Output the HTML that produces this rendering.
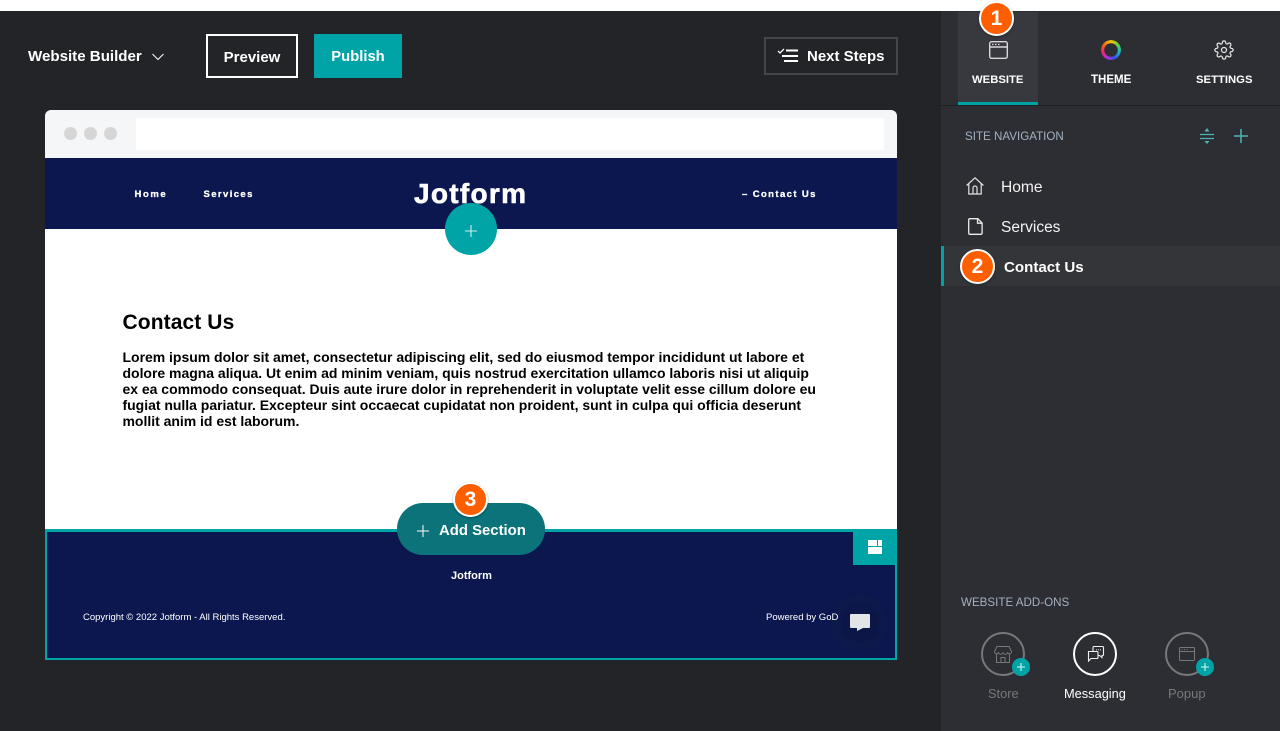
<!DOCTYPE html>
<html><head><meta charset="utf-8">
<style>
*{box-sizing:border-box;margin:0;padding:0}
html,body{width:1280px;height:731px;overflow:hidden;background:#fff;font-family:"Liberation Sans",sans-serif}
.a{position:absolute;white-space:nowrap}
svg{position:absolute;overflow:visible}
.b{font-weight:700}
.h{-webkit-text-stroke:.3px #fff}
.badge{position:absolute;width:35px;height:35px;border-radius:50%;background:#fd5f00;border:2px solid #fff;color:#fff;font-size:21px;font-weight:700;line-height:31px;text-align:center;box-shadow:0 1px 2px rgba(0,0,0,.35)}
</style></head><body>
<div class="a" style="left:0;top:11px;width:941px;height:720px;background:#232428"></div>
<div class="a" style="left:941px;top:11px;width:339px;height:720px;background:#2d2e33"></div>

<div class="a b" style="left:28px;top:48px;font-size:15.100px;line-height:18px;color:#fff">Website Builder</div>
<svg style="left:152px;top:53px" width="12" height="8" fill="none" stroke="#fff" stroke-width="1"><path d="M.5 1l5.500 5.500L11.500 1"/></svg>
<div class="a b" style="left:206px;top:34px;width:92px;height:44px;border:2px solid #fff;color:#fff;font-size:15px;line-height:43px;text-align:center">Preview</div>
<div class="a b" style="left:314px;top:34px;width:88px;height:44px;background:#00a4a6;color:#fff;font-size:14.800px;line-height:46px;text-align:center">Publish</div>
<div class="a" style="left:764px;top:37px;width:134px;height:38px;border:2px solid #44464b"></div>
<svg style="left:778px;top:48px" width="20" height="15" fill="none" stroke="#fff"><path d="M0 3l2 2 4-4" stroke-width="1.300"/><path d="M8 2.500h12M4 8h16M6 13h14" stroke-width="2"/></svg>
<div class="a b" style="left:807px;top:48px;font-size:15px;line-height:18px;color:#fff">Next Steps</div>

<!-- browser -->
<div class="a" style="left:45px;top:110px;width:852px;height:48px;background:#f5f6f8;border-radius:6px 6px 0 0"></div>
<div class="a" style="left:64px;top:127px;width:13px;height:13px;border-radius:50%;background:#d6d6d6"></div>
<div class="a" style="left:84px;top:127px;width:13px;height:13px;border-radius:50%;background:#d6d6d6"></div>
<div class="a" style="left:104px;top:127px;width:13px;height:13px;border-radius:50%;background:#d6d6d6"></div>
<div class="a" style="left:136px;top:118px;width:748px;height:32px;background:#fff"></div>
<div class="a" style="left:45px;top:158px;width:852px;height:71px;background:#0c1750"></div>
<div class="a" style="left:45px;top:229px;width:852px;height:300px;background:#fff"></div>
<div class="a b h" style="left:134.500px;top:188px;font-size:9.500px;line-height:13px;letter-spacing:1.600px;color:#fff">Home</div>
<div class="a b h" style="left:203.500px;top:188px;font-size:9.500px;line-height:13px;letter-spacing:1.400px;color:#fff">Services</div>
<div class="a b h" style="left:414px;top:177px;font-size:28px;line-height:34px;letter-spacing:1.300px;color:#fff;-webkit-text-stroke:.6px #fff">Jotform</div>
<div class="a b h" style="left:742px;top:188px;font-size:9.500px;line-height:13px;letter-spacing:1.400px;color:#fff">– Contact Us</div>
<div class="a" style="left:445px;top:203px;width:52px;height:52px;border-radius:50%;background:#00a4a6"></div>
<svg style="left:465px;top:224.500px" width="12" height="12" stroke="#cfeeee" stroke-width="1.100"><path d="M6 0v12M0 6h12"/></svg>

<div class="a b" style="left:122.500px;top:310px;font-size:21px;line-height:26px;letter-spacing:.1px;color:#000">Contact Us</div>
<div class="a b" style="left:122.500px;top:349px;width:720px;font-size:14px;line-height:16px;letter-spacing:-.02px;color:#000">Lorem ipsum dolor sit amet, consectetur adipiscing elit, sed do eiusmod tempor incididunt ut labore et<br>dolore magna aliqua. Ut enim ad minim veniam, quis nostrud exercitation ullamco laboris nisi ut aliquip<br>ex ea commodo consequat. Duis aute irure dolor in reprehenderit in voluptate velit esse cillum dolore eu<br>fugiat nulla pariatur. Excepteur sint occaecat cupidatat non proident, sunt in culpa qui officia deserunt<br>mollit anim id est laborum.</div>

<!-- footer -->
<div class="a" style="left:45px;top:529px;width:852px;height:131px;background:#0c1750;border:3px solid #00a4a6;border-width:3px 2px 2px 2px"></div>
<div class="a" style="left:853px;top:529px;width:44px;height:36px;background:#00a4a6"></div>
<div class="a" style="left:868px;top:540px;width:9px;height:6px;background:#fff"></div>
<div class="a" style="left:878px;top:540px;width:4px;height:6px;background:#fff"></div>
<div class="a" style="left:868px;top:547px;width:14px;height:7px;background:#fff"></div>
<div class="a b" style="left:451px;top:569px;font-size:11px;line-height:14px;color:#fff">Jotform</div>
<div class="a" style="left:83px;top:611px;font-size:9.500px;line-height:13px;color:#fff">Copyright © 2022 Jotform - All Rights Reserved.</div>
<div class="a" style="left:831px;top:595px;width:56px;height:56px;border-radius:50%;background:#0d184b"></div>
<div class="a" style="left:841px;top:604px;width:38px;height:38px;border-radius:50%;background:#0c1747"></div>
<div class="a" style="left:766px;top:611px;width:72px;overflow:hidden;font-size:9.500px;line-height:13px;color:#fff">Powered by GoDaddy</div>
<svg style="left:850px;top:614px" width="20" height="18"><path d="M0 1a1 1 0 0 1 1-1h18a1 1 0 0 1 1 1v12a1 1 0 0 1-1 1H13l-6 3v-3H1a1 1 0 0 1-1-1z" fill="#e3e4e8"/></svg>

<div class="a" style="left:397px;top:503px;width:148px;height:52px;border-radius:26px;background:#0b7379"></div>
<svg style="left:417px;top:524.500px" width="12" height="12" stroke="#fff" stroke-width="1"><path d="M6 0v12M0 6h12"/></svg>
<div class="a b" style="left:439px;top:522px;font-size:14.900px;line-height:18px;color:#fff">Add Section</div>
<div class="badge" style="left:453px;top:482px">3</div>

<!-- right panel -->
<div class="a" style="left:941px;top:105px;width:339px;height:1px;background:#202125"></div>
<div class="a" style="left:958px;top:12px;width:80px;height:93px;background:#38393e;border-bottom:3px solid #00a4a6"></div>
<svg style="left:989px;top:41px" width="19" height="18" fill="none" stroke="#d8d8d8" stroke-width="1.400"><rect x=".7" y=".7" width="17.600" height="16.600" rx="2"/><path d="M.7 6h17.600"/><path d="M3 3.400h1.500M6 3.400h1.500M9 3.400h1.500"/></svg>
<div class="a b" style="left:972px;top:73px;font-size:11.300px;line-height:14px;color:#fff">WEBSITE</div>
<div class="a" style="left:1101px;top:40px;width:20px;height:20px;border-radius:50%;background:conic-gradient(#f6c700,#63d13e,#14b8c4,#2f55e6,#b12de0,#f0246e,#f26a1b,#f6c700);-webkit-mask:radial-gradient(circle,transparent 6.500px,#000 7px);mask:radial-gradient(circle,transparent 6.500px,#000 7px)"></div>
<div class="a b" style="left:1091px;top:73px;font-size:11.500px;line-height:14px;color:#fff">THEME</div>
<svg style="left:1214px;top:40px" width="20" height="20" viewBox="0 0 24 24" fill="none" stroke="#e4e4e4" stroke-width="1.500"><circle cx="12" cy="12" r="3"/><path d="M19.400 15a1.650 1.650 0 0 0 .33 1.820l.06.06a2 2 0 0 1 0 2.830 2 2 0 0 1-2.830 0l-.06-.06a1.650 1.650 0 0 0-1.820-.33 1.650 1.650 0 0 0-1 1.510V21a2 2 0 0 1-2 2 2 2 0 0 1-2-2v-.09A1.650 1.650 0 0 0 9 19.400a1.650 1.650 0 0 0-1.820.33l-.06.06a2 2 0 0 1-2.830 0 2 2 0 0 1 0-2.830l.06-.06a1.650 1.650 0 0 0 .33-1.820 1.650 1.650 0 0 0-1.510-1H3a2 2 0 0 1-2-2 2 2 0 0 1 2-2h.09A1.650 1.650 0 0 0 4.600 9a1.650 1.650 0 0 0-.33-1.820l-.06-.06a2 2 0 0 1 0-2.830 2 2 0 0 1 2.830 0l.06.06a1.650 1.650 0 0 0 1.820.33H9a1.650 1.650 0 0 0 1-1.510V3a2 2 0 0 1 2-2 2 2 0 0 1 2 2v.09a1.650 1.650 0 0 0 1 1.510 1.650 1.650 0 0 0 1.820-.33l.06-.06a2 2 0 0 1 2.830 0 2 2 0 0 1 0 2.830l-.06.06a1.650 1.650 0 0 0-.33 1.820V9a1.650 1.650 0 0 0 1.510 1H21a2 2 0 0 1 2 2 2 2 0 0 1-2 2h-.09a1.650 1.650 0 0 0-1.510 1z"/></svg>
<div class="a b" style="left:1196px;top:73px;font-size:11.300px;line-height:14px;color:#fff">SETTINGS</div>
<div class="badge" style="left:979px;top:1px">1</div>

<div class="a" style="left:965px;top:130px;font-size:11.600px;line-height:14px;color:#a3b1c0">SITE NAVIGATION</div>
<svg style="left:1200px;top:128px" width="14" height="16" fill="#4fb5b5" stroke="#4fb5b5"><path d="M0 6.500h14M0 10.500h14" fill="none" stroke-width="1.200"/><path d="M4.500 3.500L7 0l2.500 3.500zM4.500 13L7 16l2.500-3z" stroke="none"/></svg>
<svg style="left:1234px;top:129px" width="14" height="14" stroke="#4fb5b5" stroke-width="1.500"><path d="M7 0v14M0 7h14"/></svg>

<svg style="left:966px;top:177px" width="18" height="18" fill="none" stroke="#e2e2e2" stroke-width="1.200"><path d="M.6 8.500L9 .8l8.400 7.700M2.800 7v10h12.400V7M7 17v-6a2 2 0 0 1 4 0v6"/></svg>
<div class="a" style="left:1001px;top:178px;font-size:15.600px;line-height:19px;color:#f2f2f2">Home</div>
<svg style="left:968px;top:218px" width="15" height="17" fill="none" stroke="#ececec" stroke-width="1.300"><path d="M1.800.7h8l4.300 4.300v10a1.300 1.300 0 0 1-1.300 1.300H1.800A1.300 1.300 0 0 1 .7 15V2A1.300 1.300 0 0 1 1.800.7zM9.500.7v4.500h4.600"/></svg>
<div class="a" style="left:1001px;top:218px;font-size:15.500px;line-height:19px;color:#f2f2f2">Services</div>
<div class="a" style="left:941px;top:246px;width:339px;height:40px;background:#343539"></div>
<div class="a" style="left:941px;top:246px;width:3px;height:40px;background:#00a4a6"></div>
<div class="a b" style="left:1004px;top:258px;font-size:15.100px;line-height:19px;color:#fff">Contact Us</div>
<div class="badge" style="left:960px;top:249px">2</div>

<div class="a" style="left:961px;top:596px;font-size:11.600px;line-height:14px;color:#a3b1c0">WEBSITE ADD-ONS</div>
<div class="a" style="left:981px;top:632px;width:44px;height:44px;border-radius:50%;border:2px solid #77787b"></div>
<svg style="left:994px;top:646px" width="18" height="17" fill="none" stroke="#77787b" stroke-width="1"><path d="M3 .5h12l2.500 5a2 2 0 0 1-4 .6 2.200 2.200 0 0 1-4.500 0 2.200 2.200 0 0 1-4.500 0 2 2 0 0 1-4-.6zM2.500 8v8.500h13V8M7 16.500v-5h4v5"/></svg>
<div class="a" style="left:1012px;top:658px;width:18px;height:18px;border-radius:50%;background:#00a4a6"></div>
<svg style="left:1016px;top:662px" width="10" height="10" stroke="#b8e6e6" stroke-width="1.300"><path d="M5 1v8M1 5h8"/></svg>
<div class="a" style="left:988px;top:686px;font-size:12.800px;line-height:16px;color:#77787b">Store</div>

<div class="a" style="left:1073px;top:632px;width:44px;height:44px;border-radius:50%;border:2px solid #fff"></div>
<svg style="left:1087px;top:646px" width="17" height="16" fill="none" stroke="#f0f0f0" stroke-width="1.100"><path d="M6 5.500V1.500A1 1 0 0 1 7 .5h8.500a1 1 0 0 1 1 1v7a1 1 0 0 1-1 1H15v2L12.500 9.500H11"/><path d="M1.500 5.500H10a1 1 0 0 1 1 1v5a1 1 0 0 1-1 1H4L1.500 15V6.500a1 1 0 0 1 0-1z"/><path d="M9 3.800h.8M11 3.800h.8M13 3.800h.8"/></svg>
<div class="a" style="left:1064px;top:686px;font-size:12.800px;line-height:16px;color:#fff">Messaging</div>

<div class="a" style="left:1165px;top:632px;width:44px;height:44px;border-radius:50%;border:2px solid #77787b"></div>
<svg style="left:1179px;top:647px" width="16" height="14" fill="none" stroke="#77787b" stroke-width="1"><rect x=".5" y=".5" width="15" height="13" rx="1"/><path d="M.5 4.500h15M2.500 2.500h1M5 2.500h1M7.500 2.500h1"/></svg>
<div class="a" style="left:1196px;top:658px;width:18px;height:18px;border-radius:50%;background:#00a4a6"></div>
<svg style="left:1200px;top:662px" width="10" height="10" stroke="#b8e6e6" stroke-width="1.300"><path d="M5 1v8M1 5h8"/></svg>
<div class="a" style="left:1168px;top:686px;font-size:13px;line-height:16px;color:#77787b">Popup</div>
</body></html>
